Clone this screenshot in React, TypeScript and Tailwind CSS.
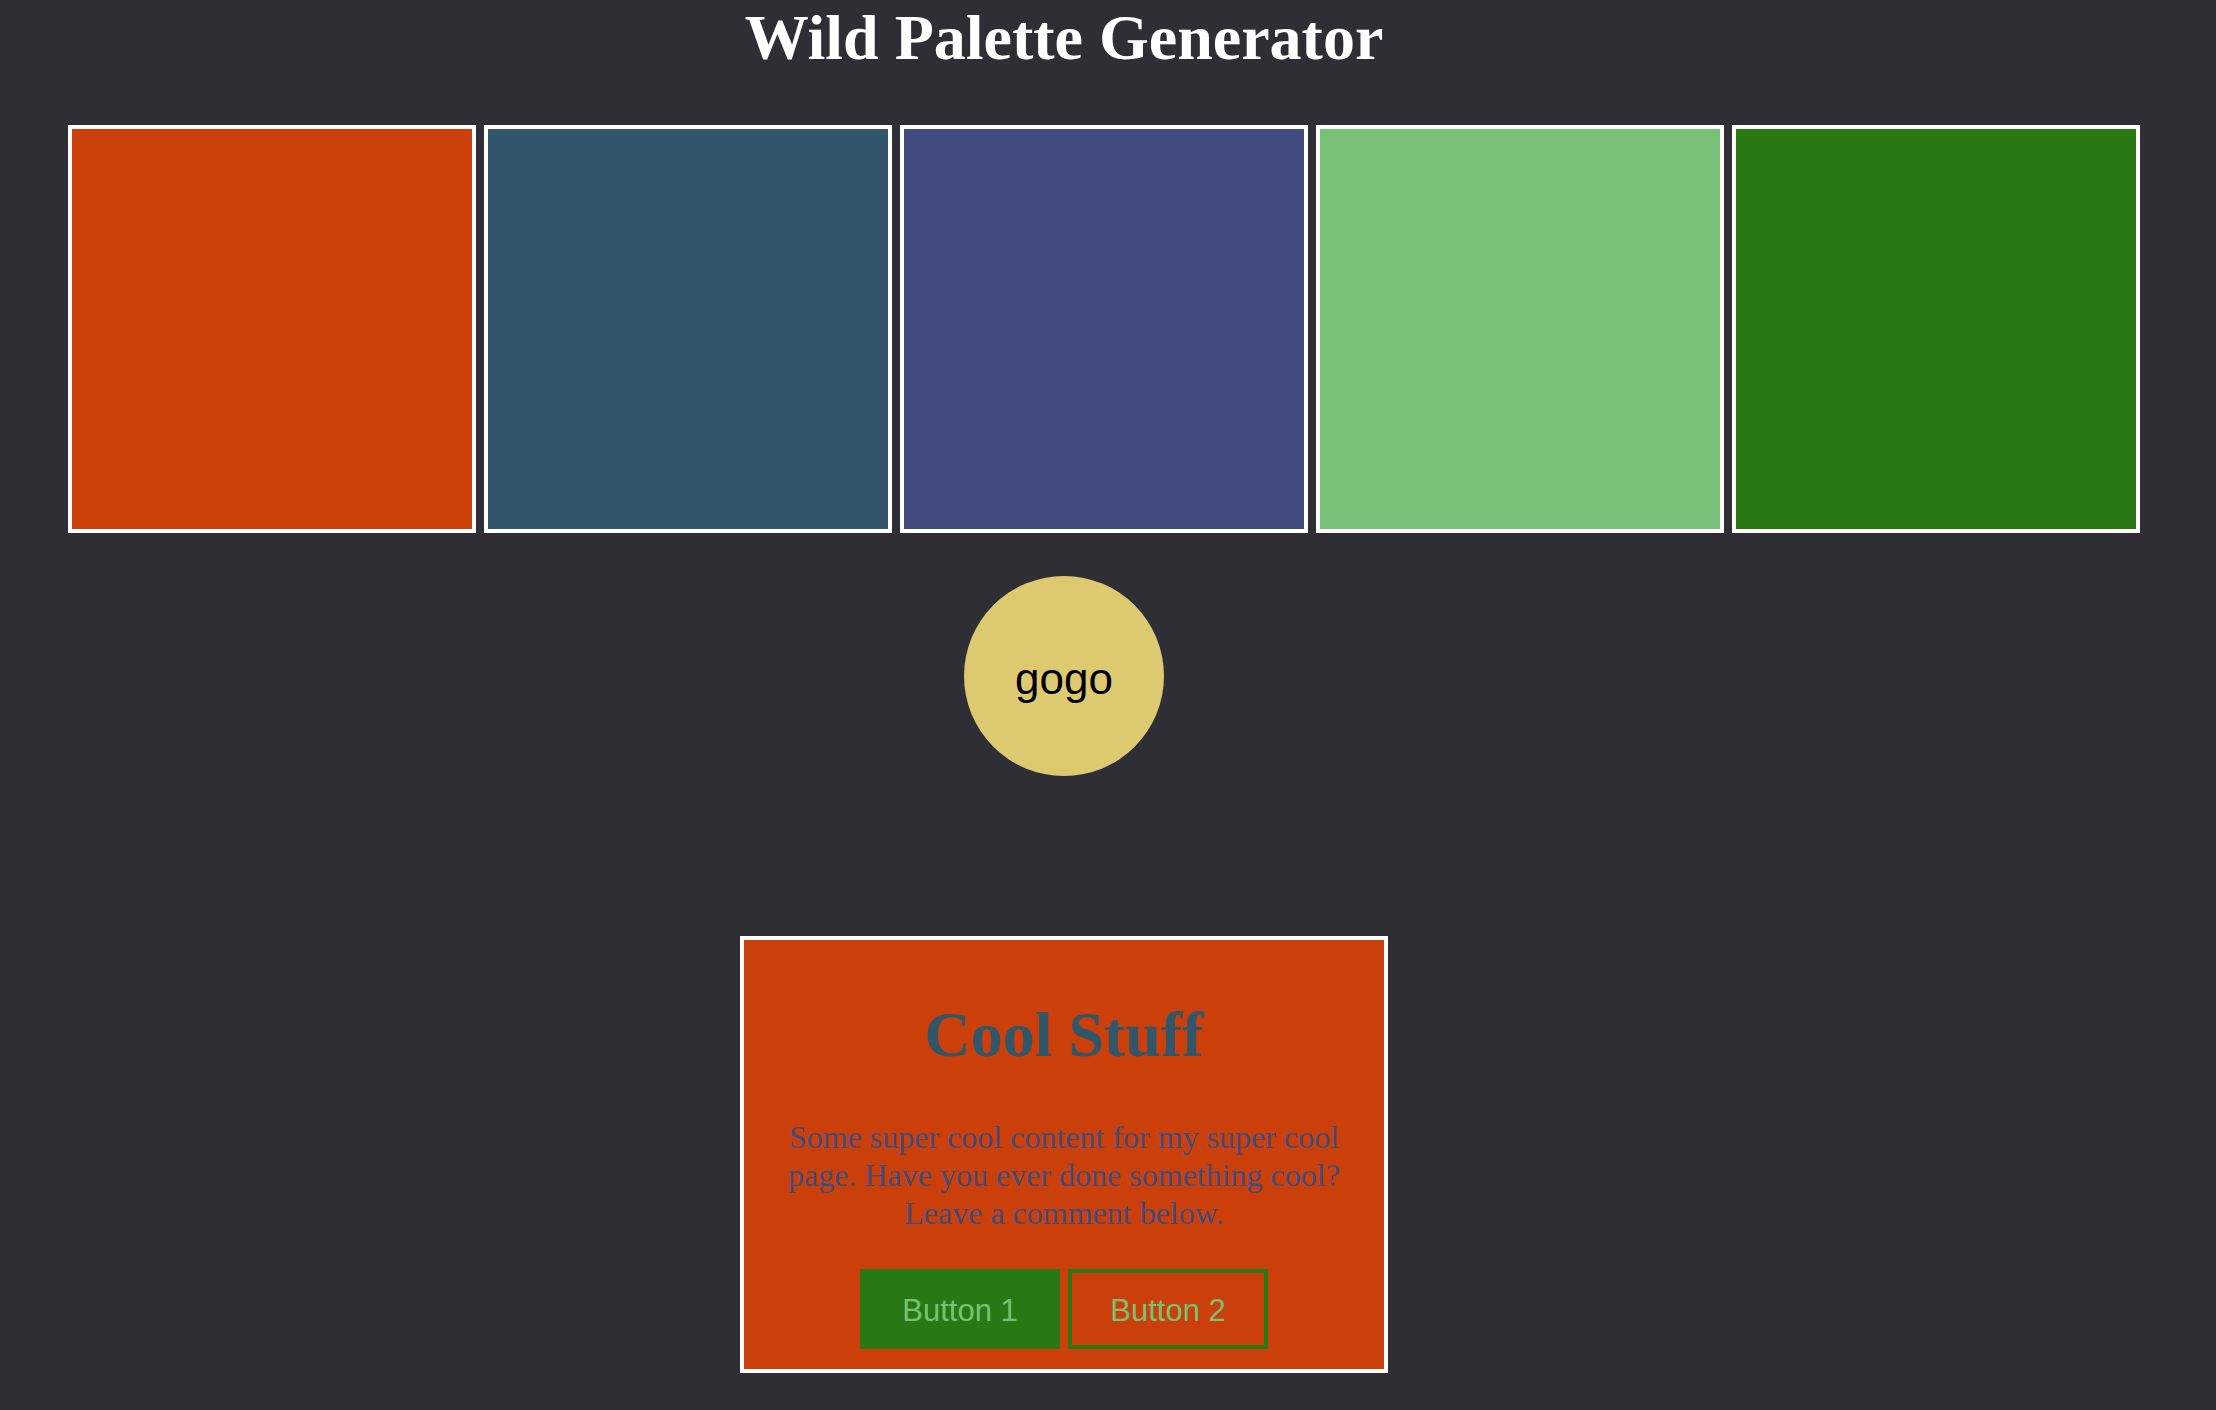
import React from "react";

const swatches = ["bg-[#cd400a]", "bg-[#31566a]", "bg-[#414b7d]", "bg-[#78c176]", "bg-[#287814]"];

export default function App() {
  return (
    <div className="min-h-screen w-full bg-[#2f2e34] overflow-hidden" style={{ fontFamily: '"Liberation Serif", "Times New Roman", serif' }}>
      <div className="w-[2128px] flex flex-col items-center">
        <h1 className="mt-[2px] text-[64px] leading-[72px] font-bold text-white">Wild Palette Generator</h1>
      </div>
      <div className="mt-[51px] flex gap-[8px] pl-[68px]">
        {swatches.map((c) => (
          <div key={c} className={`w-[408px] h-[408px] shrink-0 border-4 border-white ${c}`} />
        ))}
      </div>
      <div className="w-[2128px] flex flex-col items-center">
        <div
          className="mt-[43px] w-[200px] h-[200px] rounded-full bg-[#dcc970] flex items-center justify-center pt-[5px] text-black text-[44px]"
          style={{ fontFamily: '"Liberation Sans", Arial, sans-serif' }}
        >
          gogo
        </div>
        <div className="mt-[160px] w-[648px] h-[437px] border-4 border-white bg-[#cb400a] flex flex-col items-center px-10">
          <h2 className="mt-[59px] text-[64px] leading-[72px] font-bold text-[#31566a]">Cool Stuff</h2>
          <p className="mt-[47px] text-[32px] leading-[38px] text-[#414b7d] text-center">
            Some super cool content for my super cool page. Have you ever done something cool? Leave a comment below.
          </p>
          <div className="mt-[37px] flex gap-[8px]" style={{ fontFamily: '"Liberation Sans", Arial, sans-serif' }}>
            <button className="w-[200px] h-[80px] bg-[#287814] text-[#78c176] text-[31px] flex items-center justify-center pt-[5px]">
              Button 1
            </button>
            <button className="w-[200px] h-[80px] border-4 border-[#287814] bg-transparent text-[#78c176] text-[31px] flex items-center justify-center pt-[5px]">
              Button 2
            </button>
          </div>
        </div>
      </div>
    </div>
  );
}
